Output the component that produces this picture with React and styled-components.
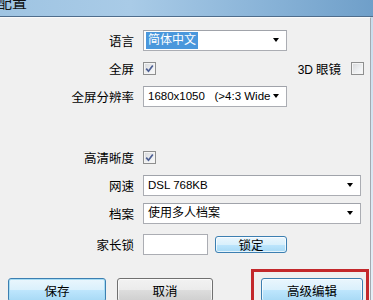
import styled, { createGlobalStyle } from "styled-components";

const GlobalStyle = createGlobalStyle`
    html, body {
        margin: 0;
        padding: 0;
        overflow: hidden;
        background: #dde8f2;
    }
    body {
        font-family: "Noto Sans CJK SC", "Liberation Sans", sans-serif;
        color: #000;
    }
`;

const Window = styled.div`
    width: 373px;
    height: 300px;
    display: flex;
    flex-direction: column;
    overflow: hidden;
`;

const TitleBar = styled.div`
    height: 16px;
    flex: none;
    overflow: hidden;
    background: linear-gradient(to right, #9fc4e2 0%, #a9cbe7 35%, #8ab4d8 70%, #6f9fc9 100%);
    border-bottom: 1px solid #4f6d8c;
`;

const Title = styled.div`
    font-size: 15px;
    line-height: 16px;
    margin-top: -6px;
    color: #111;
    text-indent: -3px;
`;

const Frame = styled.div`
    flex: 1;
    display: flex;
    min-height: 0;
`;

const Body = styled.div`
    flex: 1;
    background: #f0f0f0;
    border-right: 1px solid #a3a9b0;
    border-top: 1px solid #fafafa;
    padding-top: 8px;
    display: flex;
    flex-direction: column;
    overflow: hidden;
`;

const RightEdge = styled.div`
    width: 2px;
    background: linear-gradient(#c9dcec, #e6eef6);
`;

const Row = styled.div`
    flex: none;
    height: ${(p) => p.$h || 28}px;
    display: flex;
    align-items: center;
    margin-top: ${(p) => p.$top || 0}px;
`;

const Label = styled.div`
    width: 134px;
    flex: none;
    text-align: right;
    font-size: 12.5px;
    margin-right: 9px;
    white-space: nowrap;
`;

const Select = styled.div`
    width: ${(p) => p.$w}px;
    height: 21px;
    box-sizing: border-box;
    border: 1px solid #abadb3;
    border-top-color: #a0a3aa;
    background: #fff;
    display: flex;
    align-items: center;
    padding: 0 7px 0 2px;
    font-family: "Liberation Sans", "Noto Sans CJK SC", sans-serif;
    font-size: 11.5px;
    white-space: pre;
`;

const SelectText = styled.span`
    padding: 0 2px;
    line-height: 17px;
    background: ${(p) => (p.$selected ? "#4a97dc" : "transparent")};
    color: ${(p) => (p.$selected ? "#fff" : "#000")};
    font-size: ${(p) => (p.$cjk ? "12px" : "11.5px")};
`;

const Arrow = styled.span`
    margin-left: auto;
    width: 0;
    height: 0;
    border-left: 3.5px solid transparent;
    border-right: 3.5px solid transparent;
    border-top: 4px solid #000;
`;

const Box = styled.span`
    width: 13px;
    height: 13px;
    box-sizing: border-box;
    border: 1px solid #8e8f8f;
    background: linear-gradient(135deg, #d6d7d9 0%, #eef0f2 60%, #fafafa 100%);
    box-shadow: inset 0 0 0 1px #f4f4f4;
    display: flex;
    align-items: center;
    justify-content: center;
    flex: none;
`;

const Side = styled.div`
    margin-left: auto;
    margin-right: 6px;
    display: flex;
    align-items: center;
    gap: 10px;
`;

const SideText = styled.span`
    font-size: 12.5px;
    white-space: nowrap;
`;

const Small = styled.span`
    font-family: "Liberation Sans", sans-serif;
    font-size: 12px;
    margin-right: 3px;
`;

const Input = styled.div`
    width: 65px;
    height: 21px;
    box-sizing: border-box;
    border: 1px solid #abadb3;
    background: #fff;
`;

const Button = styled.div`
    box-sizing: border-box;
    width: ${(p) => p.$w}px;
    height: ${(p) => p.$h || 24}px;
    border: 1px solid ${(p) => (p.$blue ? "#3c7fb1" : "#707070")};
    border-radius: 3px;
    background: ${(p) =>
        p.$blue
            ? "linear-gradient(#eaf6fd 0%, #d9f0fc 50%, #bee6fd 50%, #a7d9f5 100%)"
            : "linear-gradient(#f2f2f2 0%, #ebebeb 50%, #dddddd 50%, #cfcfcf 100%)"};
    box-shadow: inset 0 0 0 1px ${(p) => (p.$glow ? "#a6dcf4" : "rgba(255,255,255,0.7)")};
    display: flex;
    align-items: center;
    justify-content: center;
    font-size: 12.5px;
    flex: none;
    margin-left: ${(p) => p.$ml || 0}px;
`;

const ButtonBar = styled.div`
    flex: none;
    display: flex;
    align-items: flex-start;
    margin-top: 11px;
    padding-left: 8px;
    gap: 11px;
`;

const Spaced = styled.div`
    padding-top: 9px;
    display: flex;
    gap: 11px;
`;

const Highlight = styled.div`
    margin-left: auto;
    margin-right: 1px;
    border: 3px solid #c3282b;
    border-bottom: none;
    padding: 6px 3px 0 7px;
    height: 40px;
`;

const Check = () => (
    <svg width="9" height="9" viewBox="0 0 9 9">
        <path d="M1.2 4.6 L3.5 7.2 L7.8 1.4" fill="none" stroke="#4d5f93" strokeWidth="1.7" />
    </svg>
);

const Checkbox = ({ checked }) => <Box>{checked && <Check />}</Box>;

const App = () => {
    return (
        <Window>
            <GlobalStyle />
            <TitleBar>
                <Title>配置</Title>
            </TitleBar>
            <Frame>
                <Body>
                    <Row>
                        <Label>语言</Label>
                        <Select $w={144}>
                            <SelectText $selected $cjk>简体中文</SelectText>
                            <Arrow />
                        </Select>
                    </Row>
                    <Row>
                        <Label>全屏</Label>
                        <Checkbox checked />
                        <Side>
                            <SideText><Small>3D</Small>眼镜</SideText>
                            <Checkbox />
                        </Side>
                    </Row>
                    <Row>
                        <Label>全屏分辨率</Label>
                        <Select $w={144}>
                            <SelectText>{"1680x1050   (>4:3 Wide"}</SelectText>
                            <Arrow />
                        </Select>
                    </Row>
                    <Row $top={33}>
                        <Label>高清晰度</Label>
                        <Checkbox checked />
                    </Row>
                    <Row>
                        <Label>网速</Label>
                        <Select $w={218}>
                            <SelectText>DSL 768KB</SelectText>
                            <Arrow />
                        </Select>
                    </Row>
                    <Row>
                        <Label>档案</Label>
                        <Select $w={218}>
                            <SelectText $cjk>使用多人档案</SelectText>
                            <Arrow />
                        </Select>
                    </Row>
                    <Row $top={3}>
                        <Label>家长锁</Label>
                        <Input />
                        <Button $blue $w={72} $h={17} $ml={7}>锁定</Button>
                    </Row>
                    <ButtonBar>
                        <Spaced>
                            <Button $blue $glow $w={98}>保存</Button>
                            <Button $w={96}>取消</Button>
                        </Spaced>
                        <Highlight>
                            <Button $blue $w={102}>高级编辑</Button>
                        </Highlight>
                    </ButtonBar>
                </Body>
                <RightEdge />
            </Frame>
        </Window>
    );
};

export default App;
